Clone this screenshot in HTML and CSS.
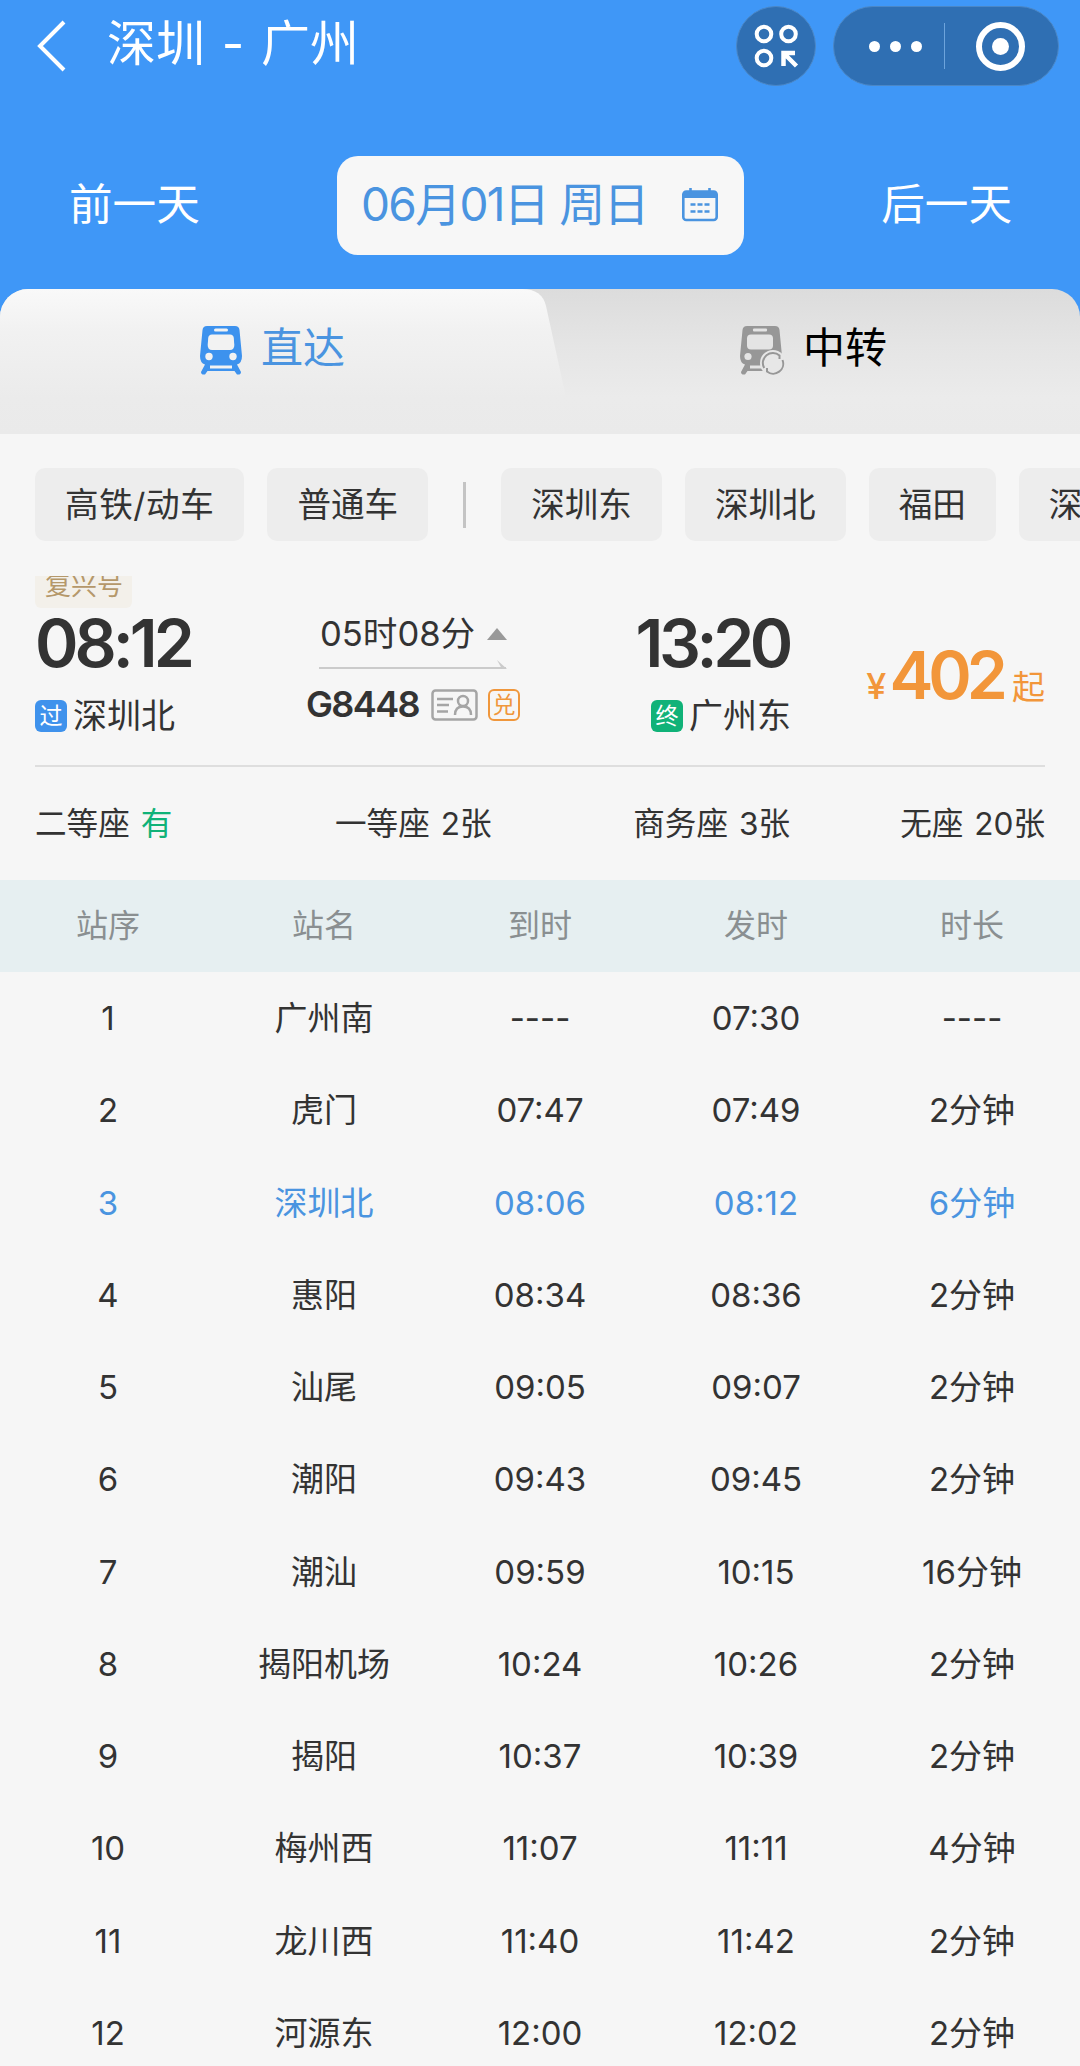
FILE: index.html
```html
<!DOCTYPE html>
<html lang="zh-CN">
<head>
    <meta charset="UTF-8">
    <meta name="viewport" content="width=device-width, initial-scale=1.0">
    <title>深圳 - 广州</title>
    <link rel="stylesheet" href="styles.css">
</head>
<body>
    <div class="page">
        <header class="header">
            <div class="titlebar">
                <svg class="back" width="30" height="52" viewBox="0 0 30 52" fill="none" stroke="#fff" stroke-width="4"><path d="M28 2L4 26l24 24"/></svg>
                <h1 class="title">深圳 - 广州</h1>
                <div class="scan">
                    <svg width="46" height="46" viewBox="0 0 46 46" fill="none" stroke="#fff" stroke-width="4">
                        <circle cx="11" cy="11" r="7.3"/>
                        <circle cx="35.5" cy="11" r="7.3"/>
                        <circle cx="11" cy="35" r="7.3"/>
                        <path d="M30.5 43V30H42M31 30.5L43.5 43" stroke-width="4.5"/>
                    </svg>
                </div>
                <div class="capsule">
                    <div class="dots"><i></i><i></i><i></i></div>
                    <div class="capsule-line"></div>
                    <div class="target"><i></i></div>
                </div>
            </div>
            <div class="datebar">
                <span class="day">前一天</span>
                <div class="date">
                    <span>06月01日 周日</span>
                    <svg width="38" height="36" viewBox="0 0 38 36" fill="none" stroke="#4a94e0" stroke-width="2.6">
                        <rect x="2.3" y="4.5" width="33.4" height="28.5" rx="3"/>
                        <path d="M2 5h34v6H2z" fill="#4a94e0" stroke="none"/>
                        <path d="M9.5 1v4M28.5 1v4"/>
                        <path d="M9.5 17.5h19M9.5 24.5h19" stroke-dasharray="5 2"/>
                    </svg>
                </div>
                <span class="day">后一天</span>
            </div>
        </header>

        <nav class="tabs">
            <svg class="tab-shape" width="600" height="145" viewBox="0 0 600 145">
                <defs>
                    <linearGradient id="tabFill" x1="0" y1="0" x2="0" y2="1">
                        <stop offset="0" stop-color="#f9f9f9"/>
                        <stop offset="0.3" stop-color="#f1f1f1"/>
                        <stop offset="0.75" stop-color="#ebebeb"/>
                        <stop offset="1" stop-color="#eaeaea"/>
                    </linearGradient>
                </defs>
                <path d="M0 0H522Q542 0 546 17L574 145H0z" fill="url(#tabFill)"/>
            </svg>
            <div class="tab active">
                <svg width="44" height="50" viewBox="0 0 44 50">
                    <path d="M8 1H36Q40 1 40.5 5L43 31Q43 38 38 39.5L42 47Q42 50 38 49.5L35.5 46H8.5L6 49.5Q2 50 2 47L6 39.5Q1 38 1 31L3.5 5Q4 1 8 1z" fill="#3d92ee"/>
                    <rect x="15" y="3.5" width="14" height="3" rx="1.5" fill="#f2f2f2"/>
                    <path d="M13 9.5H31Q34.5 9.5 34.8 13L35.3 20Q35.3 25 31 25H13Q8.7 25 8.7 20L9.2 13Q9.5 9.5 13 9.5z" fill="#f2f2f2"/>
                    <circle cx="10" cy="31.5" r="3.7" fill="#f2f2f2"/>
                    <circle cx="34" cy="31.5" r="3.7" fill="#f2f2f2"/>
                    <path d="M11 42H33" stroke="#f2f2f2" stroke-width="3"/>
                </svg>
                <span>直达</span>
            </div>
            <div class="tab transfer">
                <svg width="46" height="50" viewBox="0 0 46 50">
                    <path d="M8 1H36Q40 1 40.5 5L43 31Q43 38 38 39.5V46H8.5L6 49.5Q2 50 2 47L6 39.5Q1 38 1 31L3.5 5Q4 1 8 1z" fill="#979797"/>
                    <rect x="14" y="3.5" width="14" height="3" rx="1" fill="#e4e4e4"/>
                    <rect x="8" y="9.5" width="26" height="15" rx="4" fill="#e4e4e4"/>
                    <circle cx="9" cy="31.5" r="3.6" fill="#e4e4e4"/>
                    <path d="M11 42H32" stroke="#e4e4e4" stroke-width="3"/>
                    <circle cx="34" cy="38" r="13" fill="#e7e7e7"/>
                    <path d="M25.2 43A10 10 0 0 1 40.5 30.5V34M43.5 35A10 10 0 0 1 28 46.5V43" fill="none" stroke="#979797" stroke-width="2"/>
                </svg>
                <span>中转</span>
            </div>
        </nav>

        <div class="filters">
            <span class="chip wide">高铁/动车</span>
            <span class="chip">普通车</span>
            <i class="chip-line"></i>
            <span class="chip">深圳东</span>
            <span class="chip">深圳北</span>
            <span class="chip">福田</span>
            <span class="chip">深圳</span>
        </div>

        <section class="train">
            <div class="tag-clip"><span class="tag">复兴号</span></div>
            <div class="trip">
                <div class="stop">
                    <div class="time">08:12</div>
                    <div class="station"><b class="mark pass">过</b>深圳北</div>
                </div>
                <div class="middle">
                    <div class="duration">05时08分<i class="triangle"></i></div>
                    <svg class="arrow" width="188" height="9" viewBox="0 0 188 9"><path d="M0 8H187" stroke="#cbcbcb" stroke-width="2"/><path d="M178 0L188 9H183z" fill="#cbcbcb"/></svg>
                    <div class="number">
                        <b>G8448</b>
                        <svg width="47" height="32" viewBox="0 0 47 32" fill="none" stroke="#a5a5a5" stroke-width="2.5">
                            <rect x="1.5" y="1.5" width="44" height="29" rx="3"/>
                            <path d="M6 10H22M6 16H18M6 22.5H17"/>
                            <circle cx="32" cy="12" r="5"/>
                            <path d="M24 26Q24 17.5 32 17.5T40 26"/>
                        </svg>
                        <span class="redeem">兑</span>
                    </div>
                </div>
                <div class="stop end">
                    <div class="time">13:20</div>
                    <div class="station"><b class="mark last">终</b>广州东</div>
                </div>
                <div class="price"><small>¥</small><b>402</b><span>起</span></div>
            </div>
            <div class="seats">
                <span>二等座 <em>有</em></span>
                <span>一等座 2张</span>
                <span class="right">商务座 3张</span>
                <span class="right">无座 20张</span>
            </div>
        </section>

        <table class="stops">
            <thead>
                <tr><th>站序</th><th>站名</th><th>到时</th><th>发时</th><th>时长</th></tr>
            </thead>
            <tbody>
                <tr><td>1</td><td>广州南</td><td>----</td><td>07:30</td><td>----</td></tr>
                <tr><td>2</td><td>虎门</td><td>07:47</td><td>07:49</td><td>2分钟</td></tr>
                <tr class="current"><td>3</td><td>深圳北</td><td>08:06</td><td>08:12</td><td>6分钟</td></tr>
                <tr><td>4</td><td>惠阳</td><td>08:34</td><td>08:36</td><td>2分钟</td></tr>
                <tr><td>5</td><td>汕尾</td><td>09:05</td><td>09:07</td><td>2分钟</td></tr>
                <tr><td>6</td><td>潮阳</td><td>09:43</td><td>09:45</td><td>2分钟</td></tr>
                <tr><td>7</td><td>潮汕</td><td>09:59</td><td>10:15</td><td>16分钟</td></tr>
                <tr><td>8</td><td>揭阳机场</td><td>10:24</td><td>10:26</td><td>2分钟</td></tr>
                <tr><td>9</td><td>揭阳</td><td>10:37</td><td>10:39</td><td>2分钟</td></tr>
                <tr><td>10</td><td>梅州西</td><td>11:07</td><td>11:11</td><td>4分钟</td></tr>
                <tr><td>11</td><td>龙川西</td><td>11:40</td><td>11:42</td><td>2分钟</td></tr>
                <tr><td>12</td><td>河源东</td><td>12:00</td><td>12:02</td><td>2分钟</td></tr>
            </tbody>
        </table>
    </div>
</body>
</html>
```
FILE: styles.css
```css
* {
    box-sizing: border-box;
}
body {
    margin: 0;
    background-color: #f6f6f6;
    color: #333;
    font-family: Inter, "Noto Sans CJK SC", sans-serif;
    font-size: 33px;
    line-height: 1.2;
}
.page {
    width: 1080px;
    height: 2066px;
    overflow: hidden;
}
i, em {
    font-style: normal;
}
svg {
    display: block;
    flex-shrink: 0;
}

/* Cabecera azul */
.header {
    height: 329px;
    background-color: #3f97f7;
    color: #fff;
}
.titlebar {
    display: flex;
    align-items: center;
    height: 92px;
    padding: 0 21px 0 36px;
}
.title {
    flex: 1;
    margin: -4px 0 0 41px;
    font-size: 49px;
    font-weight: 400;
    white-space: nowrap;
    word-spacing: 3px;
}
.scan, .capsule {
    height: 80px;
    background-color: #2f6fb3;
    border: 1px solid #4b87c6;
    border-radius: 40px;
}
.scan {
    display: flex;
    align-items: center;
    justify-content: center;
    width: 80px;
    margin-right: 17px;
}
.capsule {
    display: flex;
    align-items: center;
    width: 226px;
    padding-left: 35px;
}
.dots {
    display: flex;
    gap: 10px;
}
.dots i {
    width: 11px;
    height: 11px;
    border-radius: 50%;
    background-color: #fff;
}
.capsule-line {
    width: 1px;
    height: 46px;
    margin: 0 31px 0 22px;
    background-color: #6da4dc;
}
.target {
    display: flex;
    align-items: center;
    justify-content: center;
    width: 49px;
    height: 49px;
    border: 6px solid #fff;
    border-radius: 50%;
}
.target i {
    width: 17px;
    height: 17px;
    border-radius: 50%;
    background-color: #fff;
}
.datebar {
    display: flex;
    align-items: center;
    justify-content: space-between;
    height: 99px;
    margin-top: 64px;
    padding: 0 68px 0 69px;
}
.day {
    font-size: 43.6px;
}
.date {
    display: flex;
    align-items: center;
    justify-content: space-between;
    width: 407px;
    height: 99px;
    padding: 0 25px 1px 24px;
    border-radius: 21px;
    background-color: #f7f7f7;
    color: #4a94e0;
    font-size: 46px;
    letter-spacing: -1.7px;
    white-space: nowrap;
}

/* Pestañas */
.tabs {
    position: relative;
    display: flex;
    height: 145px;
    margin-top: -40px;
    border-radius: 28px 28px 0 0;
    overflow: hidden;
    background: linear-gradient(#dcdcdc, #e5e5e5 40%, #ebebeb 75%, #eaeaea);
}
.tab-shape {
    position: absolute;
    left: 0;
    top: 0;
}
.tab {
    position: relative;
    display: flex;
    align-items: center;
    gap: 18px;
    width: 540px;
    height: 122px;
    padding-left: 199px;
    font-size: 42px;
}
.tab span {
    margin-top: -3px;
}
.tab.active {
    color: #4a94e0;
}
.transfer {
    color: #000;
}

/* Filtros */
.filters {
    display: flex;
    align-items: center;
    gap: 23px;
    height: 73px;
    margin-top: 34px;
    padding-left: 35px;
    overflow: hidden;
}
.chip {
    flex-shrink: 0;
    height: 73px;
    padding: 0 30px;
    border-radius: 10px;
    background-color: #ededed;
    font-size: 33.6px;
    line-height: 74px;
}
.chip.wide {
    letter-spacing: 0.6px;
}
.chip-line {
    flex-shrink: 0;
    width: 3px;
    height: 46px;
    margin: 0 12px;
    background-color: #c4c4c4;
}

/* Tren */
.train {
    height: 339px;
    padding: 35px 35px 0;
}
.tag-clip {
    height: 32px;
    overflow: hidden;
}
.tag {
    display: block;
    width: 97px;
    height: 44px;
    margin-top: -12px;
    padding-left: 10px;
    border-radius: 6px;
    background-color: #f3f0ea;
    color: #b5986a;
    font-size: 26px;
    line-height: 43px;
}
.trip {
    display: flex;
    height: 159px;
    border-bottom: 2px solid #dedede;
}
.stop {
    width: 230px;
}
.time {
    height: 70px;
    font-size: 66px;
    font-weight: 600;
    line-height: 70px;
    letter-spacing: -4px;
}
.station {
    display: flex;
    align-items: center;
    gap: 6px;
    height: 40px;
    margin-top: 18px;
    font-size: 34px;
}
.mark {
    width: 32px;
    height: 32px;
    border-radius: 6px;
    color: #fff;
    font-size: 23px;
    font-weight: 400;
    line-height: 33px;
    text-align: center;
}
.pass {
    background-color: #3f92ec;
}
.last {
    background-color: #10b278;
}
.middle {
    width: 260px;
    padding-left: 41px;
}
.duration {
    display: flex;
    align-items: center;
    gap: 12px;
    height: 52px;
    padding-left: 14px;
    font-size: 34.6px;
}
.triangle {
    border: 10px solid transparent;
    border-top: 0;
    border-bottom: 12px solid #999;
}
.arrow {
    margin-left: 13px;
}
.number {
    display: flex;
    align-items: center;
    height: 72px;
    font-size: 36px;
}
.number b {
    width: 115px;
    margin-right: 10px;
    font-weight: 600;
    letter-spacing: -1.6px;
}
.redeem {
    width: 32px;
    height: 32px;
    margin-left: 10px;
    border: 2px solid #f0973c;
    border-radius: 6px;
    color: #f0973c;
    font-size: 23px;
    line-height: 29px;
    text-align: center;
}
.end {
    width: 266px;
    text-align: right;
}
.end .time {
    padding-right: 2px;
    letter-spacing: -4.4px;
}
.end .station {
    justify-content: flex-end;
}
.price {
    display: flex;
    align-items: baseline;
    justify-content: flex-end;
    flex: 1;
    height: 100px;
    padding-top: 28px;
    color: #f2963a;
    white-space: nowrap;
}
.price small {
    font-size: 36px;
    font-weight: 500;
}
.price b {
    margin: 0 9px 0 3px;
    font-size: 66px;
    font-weight: 600;
    letter-spacing: -5px;
}
.price span {
    font-size: 33px;
}
.seats {
    display: grid;
    grid-template-columns: 300px 200px 255px 1fr;
    align-items: center;
    height: 113px;
    font-size: 31.6px;
    white-space: nowrap;
    word-spacing: 2px;
}
.seats em {
    color: #10b278;
}
.seats .right {
    text-align: right;
}

/* Tabla de paradas */
.stops {
    width: 1080px;
    table-layout: fixed;
    border-collapse: collapse;
}
.stops th, .stops td {
    height: 92.25px;
    padding: 1px 0 0;
    font-weight: 400;
    text-align: center;
    white-space: nowrap;
}
.stops th {
    background-color: #e6eff1;
    color: #8a8f91;
    font-size: 32px;
}
.stops .current td {
    color: #4a94e0;
}
```
